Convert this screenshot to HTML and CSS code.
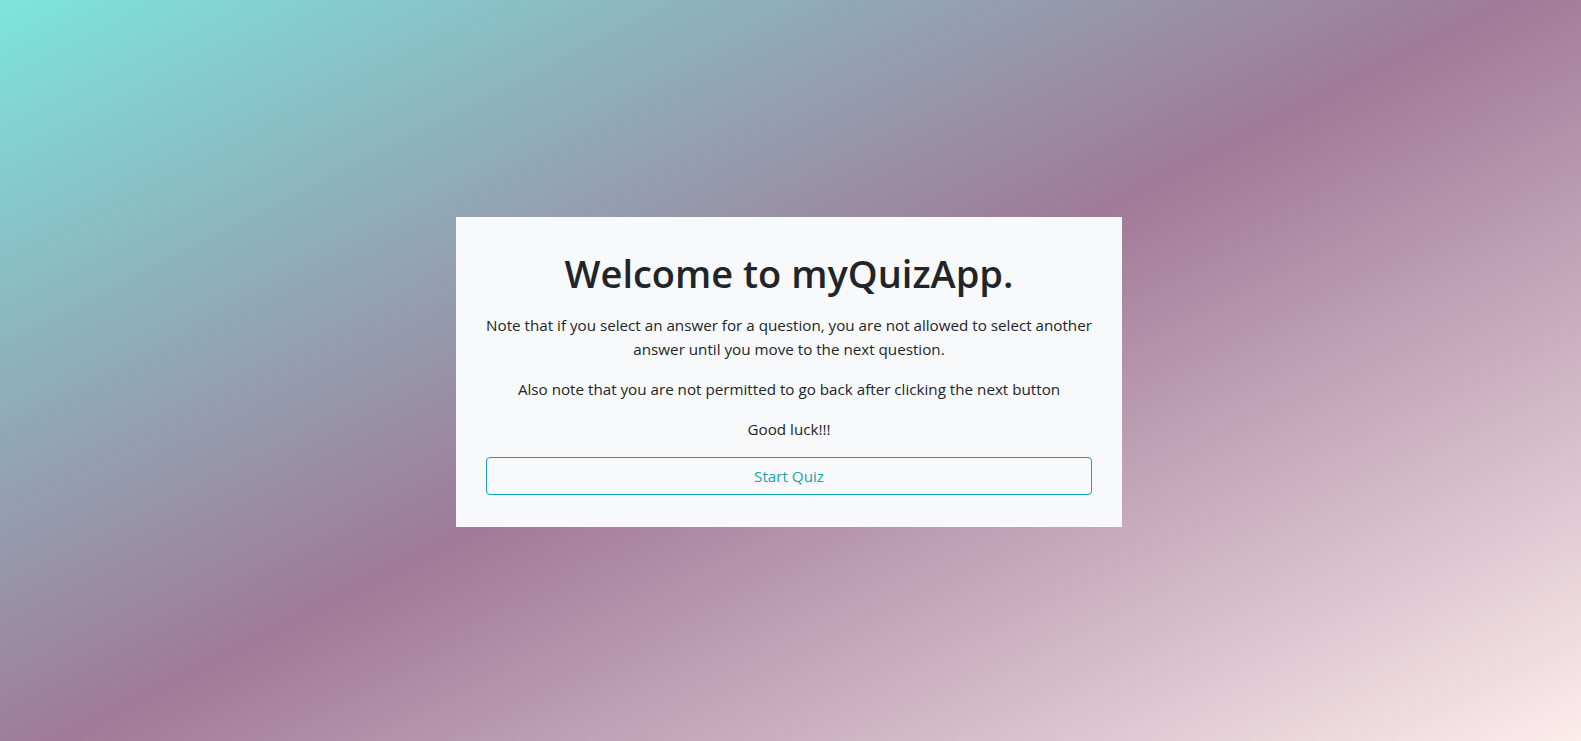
FILE: index.html
```html
<!DOCTYPE html>
<html lang="en">
<head>
<meta charset="utf-8">
<title>myQuizApp</title>
<link rel="stylesheet" href="styles.css">
</head>
<body>
<main class="page">
  <section class="card">
    <h1 class="title">Welcome to myQuizApp.</h1>
    <p class="note">Note that if you select an answer for a question, you are not allowed to select another answer until you move to the next question.</p>
    <p class="note">Also note that you are not permitted to go back after clicking the next button</p>
    <p class="note">Good luck!!!</p>
    <button class="start-btn" type="button">Start Quiz</button>
  </section>
</main>
</body>
</html>
```
FILE: styles.css
```css
* { box-sizing: border-box; }
html, body { margin: 0; padding: 0; height: 100%; }
body {
  font-family: "Open Sans", "Noto Sans", "Liberation Sans", sans-serif;
  font-size: 15.2px;
  line-height: 24px;
  color: #212529;
  background: linear-gradient(153deg, #7de4de 0%, #a07a98 50%, #fdecec 100%);
  overflow: hidden;
}
.page {
  height: 741px;
  display: flex;
  align-items: center;
  justify-content: center;
  padding: 3px 3px 0 0;
}
.card {
  width: 666px;
  background: #f8f9fa;
  padding: 32px 30px;
  text-align: center;
}
.title {
  margin: 0 0 16px;
  font-size: 38px;
  line-height: 48px;
  font-weight: 600;
  color: #212529;
}
.note {
  margin: 0 0 16px;
}
.start-btn {
  display: block;
  width: 100%;
  height: 38px;
  padding: 6px 12px;
  border: 1px solid #17a2b8;
  border-radius: 4px;
  background: transparent;
  color: #17a2b8;
  font-family: inherit;
  font-size: 15.2px;
  line-height: 24px;
  cursor: pointer;
}
```
